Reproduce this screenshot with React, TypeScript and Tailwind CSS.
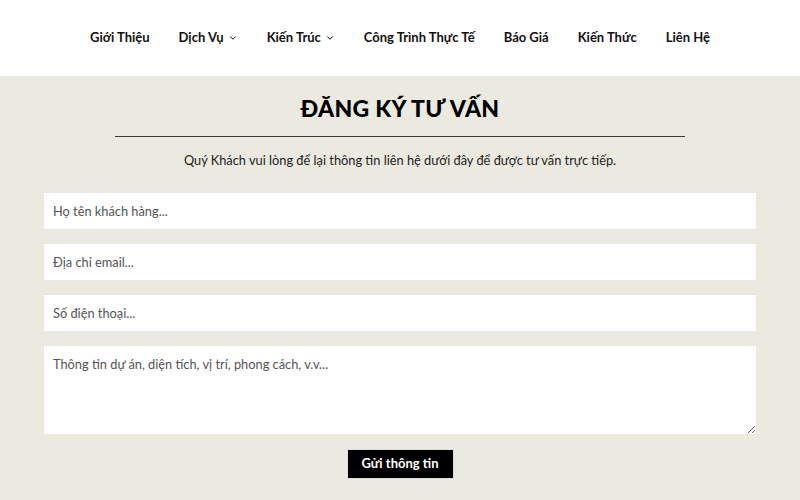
import { ChevronDown } from "lucide-react"

const navItems = [
    { label: "Giới Thiệu" },
    { label: "Dịch Vụ", dropdown: true },
    { label: "Kiến Trúc", dropdown: true },
    { label: "Công Trình Thực Tế" },
    { label: "Báo Giá" },
    { label: "Kiến Thức" },
    { label: "Liên Hệ" },
]

const font = "font-['Lato','Liberation_Sans',sans-serif]"

export default function App() {
    return (
        <div className={`w-[800px] h-[500px] overflow-hidden bg-[#ebeae0] ${font}`}>
            {/* header */}
            <header className="h-[76px] bg-white flex items-center justify-center">
                <nav className="flex items-center gap-[29px] mb-[1px]">
                    {navItems.map(item => (
                        <a key={item.label} className="flex items-center gap-[4px] text-[13px] font-bold text-[#111] leading-none">
                            {item.label}
                            {item.dropdown && <ChevronDown size={10} strokeWidth={2.4} className="mt-[1px]" />}
                        </a>
                    ))}
                </nav>
            </header>

            {/* form */}
            <section className="flex flex-col items-center px-[44px]">
                <h2 className="mt-[17px] text-[23px] font-black tracking-[0.3px] text-black leading-[30px]">
                    ĐĂNG KÝ TƯ VẤN
                </h2>
                <div className="mt-[13px] w-[570px] h-[1px] bg-[#3b3b36]" />
                <p className="mt-[14px] text-[12.8px] text-[#222] leading-[18px]">
                    Quý Khách vui lòng để lại thông tin liên hệ dưới đây để được tư vấn trực tiếp.
                </p>

                <form className="mt-[24px] w-full flex flex-col gap-[15px]">
                    <input
                        className="h-[36px] bg-white px-[9px] text-[12.8px] text-[#333] placeholder:text-[#555] outline-none"
                        placeholder="Họ tên khách hàng..."
                    />
                    <input
                        className="h-[36px] bg-white px-[9px] text-[12.8px] text-[#333] placeholder:text-[#555] outline-none"
                        placeholder="Địa chỉ email..."
                    />
                    <input
                        className="h-[36px] bg-white px-[9px] text-[12.8px] text-[#333] placeholder:text-[#555] outline-none"
                        placeholder="Số điện thoại..."
                    />
                    <textarea
                        className="h-[88px] bg-white px-[9px] py-[9px] text-[12.8px] leading-[18px] text-[#333] placeholder:text-[#555] outline-none"
                        placeholder="Thông tin dự án, diện tích, vị trí, phong cách, v.v..."
                    />
                    <div className="flex justify-center">
                        <button
                            type="submit"
                            className="w-[107px] h-[30px] bg-black text-white text-[13px] font-bold border border-[#ddd]"
                        >
                            Gửi thông tin
                        </button>
                    </div>
                </form>
            </section>
        </div>
    )
}
